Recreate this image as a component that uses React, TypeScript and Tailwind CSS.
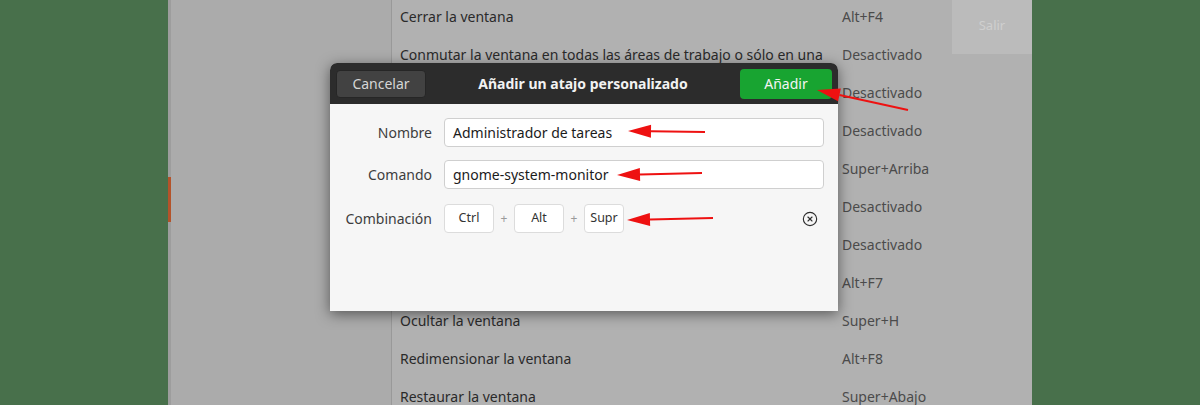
import { CircleX } from 'lucide-react';

const FONT = { fontFamily: '"Noto Sans", "Open Sans", sans-serif' };

// names of rows that sit fully under the dialog are not visible in the shot
const ROWS = [
  ['Cerrar la ventana', 'Alt+F4'],
  ['Conmutar la ventana en todas las áreas de trabajo o sólo en una', 'Desactivado'],
  ['', 'Desactivado'],
  ['', 'Desactivado'],
  ['', 'Super+Arriba'],
  ['', 'Desactivado'],
  ['', 'Desactivado'],
  ['', 'Alt+F7'],
  ['Ocultar la ventana', 'Super+H'],
  ['Redimensionar la ventana', 'Alt+F8'],
  ['Restaurar la ventana', 'Super+Abajo'],
];

// tail -> tip, head drawn at tip
const ARROWS: [number, number, number, number][] = [
  [705, 132, 628, 131],
  [702, 173, 617, 175],
  [713, 218, 627, 220],
  [908, 110, 817, 90],
];

function Arrow({ x1, y1, x2, y2 }: { x1: number; y1: number; x2: number; y2: number }) {
  const a = Math.atan2(y1 - y2, x1 - x2);
  const len = 23;
  const half = 6.5;
  const bx = x2 + Math.cos(a) * len;
  const by = y2 + Math.sin(a) * len;
  const px = -Math.sin(a) * half;
  const py = Math.cos(a) * half;
  return (
    <g>
      <line x1={x1} y1={y1} x2={bx} y2={by} stroke="#ee1111" strokeWidth={2} />
      <polygon points={`${x2},${y2} ${bx + px},${by + py} ${bx - px},${by - py}`} fill="#ee1111" />
    </g>
  );
}

function Field({ label, value }: { label: string; value: string }) {
  return (
    <div className="flex items-center">
      <div className="w-[102px] pr-[12px] text-right text-[14px] text-[#3d3d3d]">{label}</div>
      <div className="flex h-[29px] flex-1 items-center rounded-[4px] border border-[#cfcfcf] bg-white px-[8px] text-[14px] text-[#1b1b1b]">
        {value}
      </div>
    </div>
  );
}

function Key({ label, w }: { label: string; w: string }) {
  return (
    <div className={`flex h-[29px] ${w} items-center justify-center rounded-[4px] border border-[#dcdcdc] bg-white text-[12.5px] text-[#333]`}>
      {label}
    </div>
  );
}

export default function App() {
  return (
    <div className="relative flex h-[405px] w-[1200px] overflow-hidden bg-[#48704b]" style={FONT}>
      <div className="w-[168px] shrink-0" />

      <div className="flex w-[864px] shrink-0">
        {/* sidebar */}
        <div className="relative w-[223px] shrink-0 border-l-[3px] border-[#9d9d9d] bg-[#ababab]">
          <div className="absolute -left-[3px] top-[177px] h-[45px] w-[3px] bg-[#b4532a]" />
        </div>

        {/* shortcuts list */}
        <div className="flex flex-1 border-l border-[#999999] bg-[#b1b1b1]">
          <div className="-mt-[3px] flex-1">
            {ROWS.map(([name, key], i) => (
              <div key={i} className="flex h-[38px] items-center text-[14px]">
                <div className="w-[450px] shrink-0 whitespace-nowrap pl-[8px] text-[#2a2a2a]">{name}</div>
                <div className="whitespace-nowrap text-[#4b4b4b]">{key}</div>
              </div>
            ))}
          </div>
          <div className="w-[80px] shrink-0">
            <div className="flex h-[54px] items-center justify-center bg-[#bbbbbb] pb-[2px] text-[13px] text-[#cfcfcf]">Salir</div>
          </div>
        </div>
      </div>

      <div className="w-[168px] shrink-0" />

      {/* dialog */}
      <div className="absolute left-[330px] top-[63px] flex h-[248px] w-[508px] flex-col overflow-hidden rounded-t-[7px] bg-[#f6f6f6] shadow-[0_3px_14px_rgba(0,0,0,0.5)]">
        <div className="flex h-[41px] shrink-0 items-center justify-between bg-[#2c2c2c] px-[6px]">
          <button className="h-[28px] w-[90px] rounded-[4px] border border-[#262626] bg-[#424242] text-[14px] text-[#d6d6d6]">
            Cancelar
          </button>
          <div className="text-[14px] font-bold text-[#f2f2f2]">Añadir un atajo personalizado</div>
          <button className="h-[30px] w-[92px] rounded-[4px] bg-[#18a431] text-[14px] text-[#f4f4f4]">Añadir</button>
        </div>

        <div className="flex flex-col gap-[13px] pl-[12px] pr-[14px] pt-[14px]">
          <Field label="Nombre" value="Administrador de tareas" />
          <Field label="Comando" value="gnome-system-monitor" />
          <div className="mt-[2px] flex items-center">
            <div className="w-[102px] pr-[12px] text-right text-[14px] text-[#3d3d3d]">Combinación</div>
            <div className="flex flex-1 items-center">
              <Key label="Ctrl" w="w-[50px]" />
              <span className="w-[20px] text-center text-[12px] text-[#9a9a9a]">+</span>
              <Key label="Alt" w="w-[50px]" />
              <span className="w-[20px] text-center text-[12px] text-[#9a9a9a]">+</span>
              <Key label="Supr" w="w-[40px]" />
              <div className="flex-1" />
              <CircleX className="mr-[6px] h-[16px] w-[16px] text-[#2f2f2f]" strokeWidth={1.7} />
            </div>
          </div>
        </div>
      </div>

      {/* annotation arrows */}
      <svg className="pointer-events-none absolute left-0 top-0" width={1200} height={405}>
        {ARROWS.map(([x1, y1, x2, y2], i) => (
          <Arrow key={i} x1={x1} y1={y1} x2={x2} y2={y2} />
        ))}
      </svg>
    </div>
  );
}
